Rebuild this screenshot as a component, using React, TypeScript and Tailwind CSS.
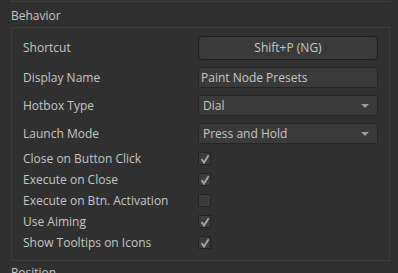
const rows = [
  { label: "Close on Button Click", checked: true },
  { label: "Execute on Close", checked: true },
  { label: "Execute on Btn. Activation", checked: false },
  { label: "Use Aiming", checked: true },
  { label: "Show Tooltips on Icons", checked: true },
];

function Check({ on }: { on: boolean }) {
  return (
    <div className="w-[13px] h-[13px] border border-[#232323] bg-[#3b3b3b] flex items-center justify-center">
      {on && (
        <svg width="10" height="10" viewBox="0 0 10 10">
          <path d="M1.5 5 L4 8.6 L8.6 1.2" fill="none" stroke="#a6a6a6" strokeWidth="1.8" />
        </svg>
      )}
    </div>
  );
}

function Combo({ text }: { text: string }) {
  return (
    <div className="h-[21px] w-[180px] border border-[#252525] bg-[#3a3a3a] rounded-[2px] flex items-center justify-between pl-[4px] pr-[8px]">
      <span>{text}</span>
      <span className="w-0 h-0 border-l-[4px] border-r-[4px] border-t-[4px] border-l-transparent border-r-transparent border-t-[#9a9a9a]" />
    </div>
  );
}

export default function App() {
  return (
    <div
      className="w-[398px] h-[273px] bg-[#303030] text-[#c6c6c6] text-[12px] overflow-hidden relative"
      style={{ fontFamily: '"Open Sans", "Noto Sans", sans-serif' }}
    >
      <div className="ml-[11px] w-[379px] h-[2px] border-b border-r border-l border-[#3d3d3d]" />
      <div className="ml-[11px] mt-[6px] leading-[16px]">Behavior</div>
      <div className="ml-[11px] mt-[3px] w-[379px] h-[234px] border border-[#3d3d3d] pl-[11px] pt-[8px]">
        <div className="flex items-center h-[24px]">
          <div className="w-[175px]">Shortcut</div>
          <div className="h-[24px] w-[180px] border border-[#1e1e1e] bg-[#3a3a3a] rounded-[4px] flex items-center justify-center">
            Shift+P (NG)
          </div>
        </div>
        <div className="flex items-center h-[21px] mt-[7px]">
          <div className="w-[175px]">Display Name</div>
          <div className="h-[21px] w-[180px] border border-[#252525] bg-[#3a3a3a] rounded-[2px] flex items-center pl-[2px]">
            Paint Node Presets
          </div>
        </div>
        <div className="flex items-center h-[21px] mt-[7px]">
          <div className="w-[175px]">Hotbox Type</div>
          <Combo text="Dial" />
        </div>
        <div className="flex items-center h-[21px] mt-[7px]">
          <div className="w-[175px]">Launch Mode</div>
          <Combo text="Press and Hold" />
        </div>
        <div className="mt-[4px]">
          {rows.map((r) => (
            <div key={r.label} className="flex items-center h-[21px]">
              <div className="w-[175px]">{r.label}</div>
              <Check on={r.checked} />
            </div>
          ))}
        </div>
      </div>
      <div className="ml-[11px] mt-[4px] leading-[16px]">Position</div>
    </div>
  );
}
